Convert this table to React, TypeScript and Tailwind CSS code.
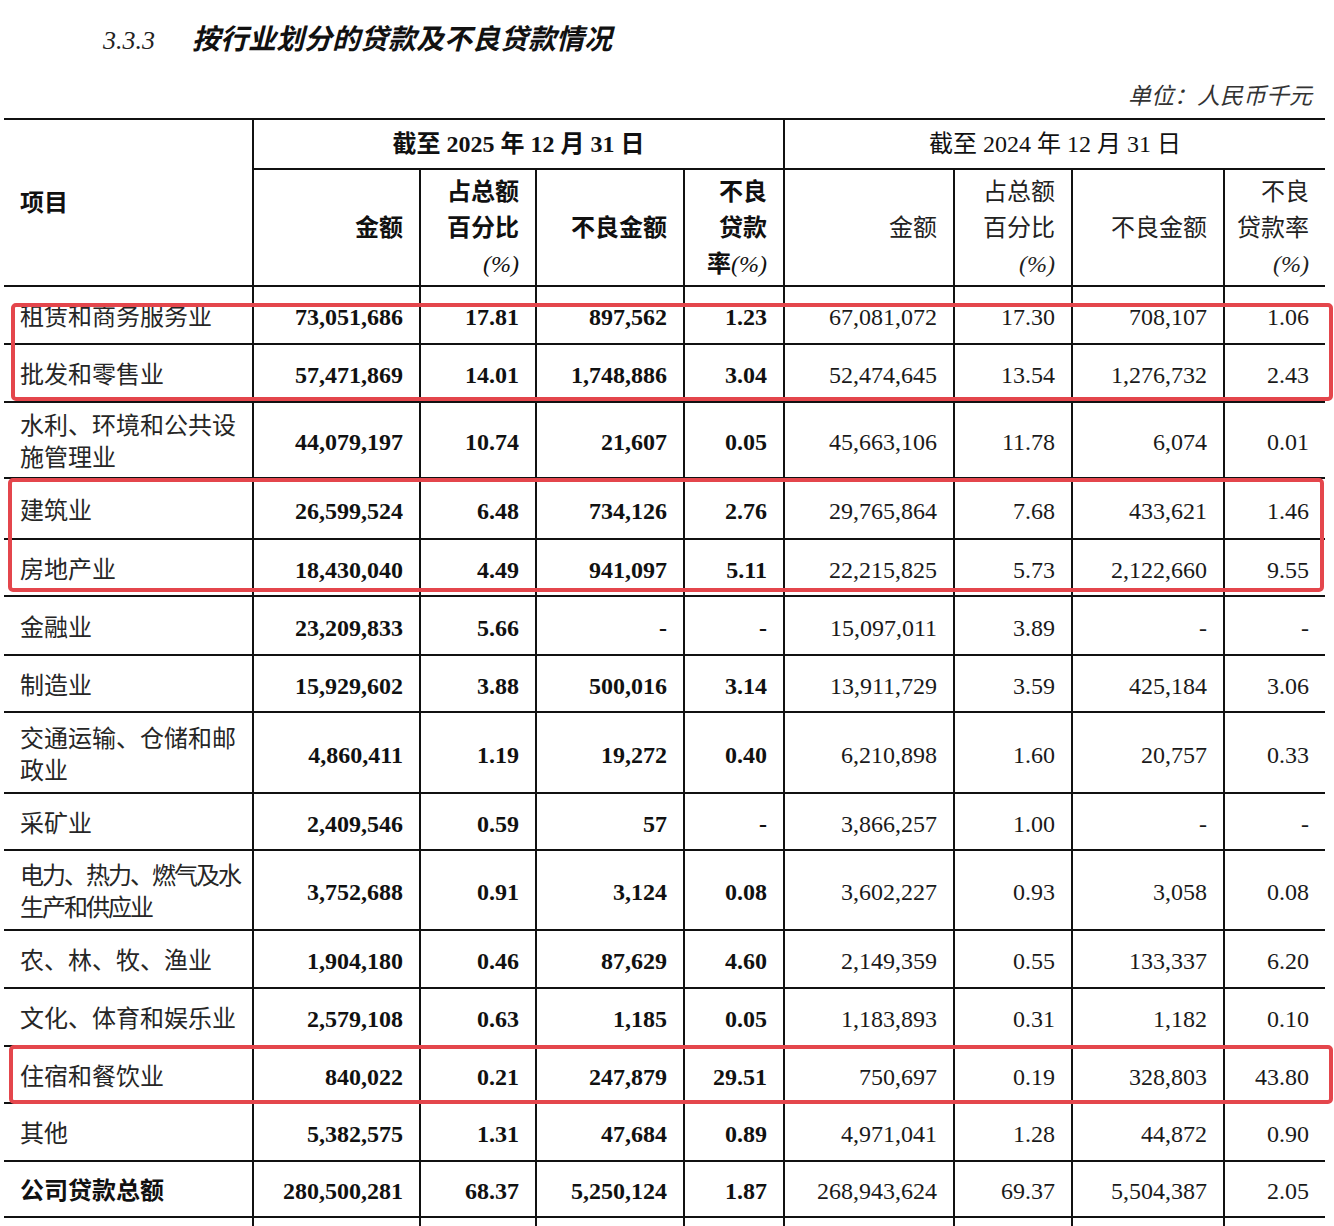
const W = [
  "w-[248px]",
  "w-[167px]",
  "w-[116px]",
  "w-[148px]",
  "w-[100px]",
  "w-[170px]",
  "w-[118px]",
  "w-[152px]",
  "w-[102px]",
];

type Row = {
  label: string[];
  v: string[];
  h: string;
  total?: boolean;
  tight?: boolean;
};

const rows: Row[] = [
  { label: ["租赁和商务服务业"], v: ["73,051,686", "17.81", "897,562", "1.23", "67,081,072", "17.30", "708,107", "1.06"], h: "h-[58px]" },
  { label: ["批发和零售业"], v: ["57,471,869", "14.01", "1,748,886", "3.04", "52,474,645", "13.54", "1,276,732", "2.43"], h: "h-[58px]" },
  { label: ["水利、环境和公共设", "施管理业"], v: ["44,079,197", "10.74", "21,607", "0.05", "45,663,106", "11.78", "6,074", "0.01"], h: "h-[76px]" },
  { label: ["建筑业"], v: ["26,599,524", "6.48", "734,126", "2.76", "29,765,864", "7.68", "433,621", "1.46"], h: "h-[61px]" },
  { label: ["房地产业"], v: ["18,430,040", "4.49", "941,097", "5.11", "22,215,825", "5.73", "2,122,660", "9.55"], h: "h-[57px]" },
  { label: ["金融业"], v: ["23,209,833", "5.66", "-", "-", "15,097,011", "3.89", "-", "-"], h: "h-[59px]" },
  { label: ["制造业"], v: ["15,929,602", "3.88", "500,016", "3.14", "13,911,729", "3.59", "425,184", "3.06"], h: "h-[57px]" },
  { label: ["交通运输、仓储和邮", "政业"], v: ["4,860,411", "1.19", "19,272", "0.40", "6,210,898", "1.60", "20,757", "0.33"], h: "h-[81px]" },
  { label: ["采矿业"], v: ["2,409,546", "0.59", "57", "-", "3,866,257", "1.00", "-", "-"], h: "h-[57px]" },
  { label: ["电力、热力、燃气及水", "生产和供应业"], v: ["3,752,688", "0.91", "3,124", "0.08", "3,602,227", "0.93", "3,058", "0.08"], h: "h-[80px]", tight: true },
  { label: ["农、林、牧、渔业"], v: ["1,904,180", "0.46", "87,629", "4.60", "2,149,359", "0.55", "133,337", "6.20"], h: "h-[58px]" },
  { label: ["文化、体育和娱乐业"], v: ["2,579,108", "0.63", "1,185", "0.05", "1,183,893", "0.31", "1,182", "0.10"], h: "h-[58px]" },
  { label: ["住宿和餐饮业"], v: ["840,022", "0.21", "247,879", "29.51", "750,697", "0.19", "328,803", "43.80"], h: "h-[57px]" },
  { label: ["其他"], v: ["5,382,575", "1.31", "47,684", "0.89", "4,971,041", "1.28", "44,872", "0.90"], h: "h-[58px]" },
  { label: ["公司贷款总额"], v: ["280,500,281", "68.37", "5,250,124", "1.87", "268,943,624", "69.37", "5,504,387", "2.05"], h: "h-[56px]", total: true },
];

function DataRow({ row }: { row: Row }) {
  return (
    <div className={`flex border-t-2 border-[#111] ${row.h}`}>
      <div
        className={`${W[0]} shrink-0 flex items-center pl-4 pt-1 ${
          row.total ? "font-bold text-[#111]" : "text-[#262626]"
        } ${row.tight ? "tracking-[-2px]" : ""}`}
      >
        <div className="leading-[32px] whitespace-nowrap">
          {row.label.map((l) => (
            <div key={l}>{l}</div>
          ))}
        </div>
      </div>
      {row.v.map((v, k) => (
        <div
          key={k}
          className={`${W[k + 1]} shrink-0 border-l-2 border-[#111] flex items-center justify-end pr-4 pt-1 ${
            k < 4 ? "font-bold" : "text-[#1a1a1a]"
          }`}
        >
          {v}
        </div>
      ))}
    </div>
  );
}

function Pct() {
  return <span className="italic font-normal">(%)</span>;
}

const subHeads: { lines: React.ReactNode[]; bold?: boolean }[] = [
  { lines: ["金额"], bold: true },
  { lines: ["占总额", "百分比", <Pct key="p" />], bold: true },
  { lines: ["不良金额"], bold: true },
  { lines: ["不良", "贷款", <span key="r">率<Pct /></span>], bold: true },
  { lines: ["金额"] },
  { lines: ["占总额", "百分比", <Pct key="p" />] },
  { lines: ["不良金额"] },
  { lines: ["不良", "贷款率", <Pct key="p" />] },
];

export default function App() {
  return (
    <div className="relative w-[1334px] h-[1226px] overflow-hidden bg-white text-[#111] text-[24px] font-['Liberation_Serif','Noto_Sans_CJK_SC',serif]">
      <div className="flex items-center h-[80px] pl-[103px]">
        <span className="italic text-[26px] text-[#222]">3.3.3</span>
        <span className="ml-[37px] italic font-bold text-[28px]">按行业划分的贷款及不良贷款情况</span>
      </div>
      <div className="flex justify-end items-center h-[38px] pb-1 pr-[22px]">
        <span className="italic text-[23px] text-[#333]">单位：人民币千元</span>
      </div>

      <div className="ml-[4px] w-[1321px]">
        {/* header */}
        <div className="flex border-t-2 border-[#111] h-[167px]">
          <div className={`${W[0]} shrink-0 flex items-center pl-4 font-bold`}>项目</div>
          <div className="flex flex-col">
            <div className="flex h-[48px]">
              <div className="w-[531px] border-l-2 border-[#111] flex items-center justify-center font-bold">
                截至 2025 年 12 月 31 日
              </div>
              <div className="w-[542px] border-l-2 border-[#111] flex items-center justify-center">
                截至 2024 年 12 月 31 日
              </div>
            </div>
            <div className="flex h-[117px] border-t-2 border-[#111]">
              {subHeads.map((s, k) => (
                <div
                  key={k}
                  className={`${W[k + 1]} shrink-0 border-l-2 border-[#111] flex flex-col justify-center items-end pr-4 leading-[36px] ${
                    s.bold ? "font-bold" : "text-[#222]"
                  }`}
                >
                  {s.lines.map((l, i) => (
                    <div key={i}>{l}</div>
                  ))}
                </div>
              ))}
            </div>
          </div>
        </div>

        {rows.map((r) => (
          <DataRow key={r.label[0]} row={r} />
        ))}

        <div className="flex border-t-2 border-[#111] h-[40px]">
          {W.map((w, k) => (
            <div key={k} className={`${w} shrink-0 ${k > 0 ? "border-l-2 border-[#111]" : ""}`} />
          ))}
        </div>
      </div>

      {/* highlight boxes */}
      <div className="pointer-events-none absolute left-[11px] top-[303px] w-[1322px] h-[98px] rounded-[5px] border-4 border-[#e4464c]" />
      <div className="pointer-events-none absolute left-[8px] top-[478px] w-[1316px] h-[114px] rounded-[5px] border-4 border-[#e4464c]" />
      <div className="pointer-events-none absolute left-[9px] top-[1045px] w-[1324px] h-[59px] rounded-[5px] border-4 border-[#e4464c]" />
    </div>
  );
}
